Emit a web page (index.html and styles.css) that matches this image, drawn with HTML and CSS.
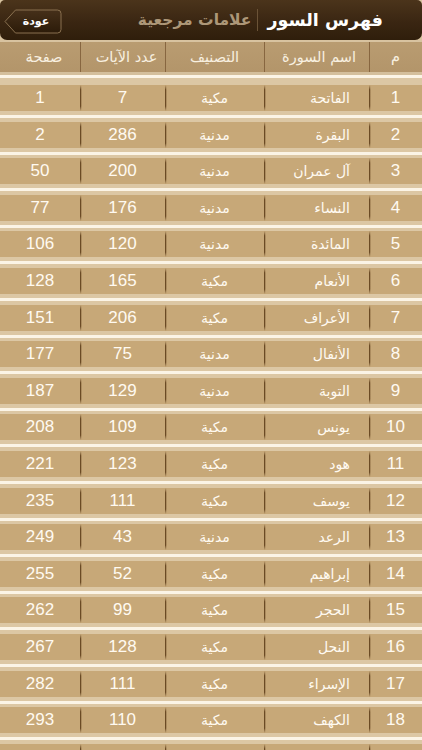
FILE: index.html
```html
<!DOCTYPE html>
<html lang="ar" dir="rtl">
<head>
<meta charset="utf-8">
<title>فهرس السور</title>
<link rel="stylesheet" href="styles.css">
</head>
<body>
<header class="topbar">
  <h1 class="title">فهرس السور</h1>
  <span class="title-sep"></span>
  <h2 class="subtitle">علامات مرجعية</h2>
  <button class="back">
    <svg class="back-shape" width="58" height="25" viewBox="0 0 58 25" aria-hidden="true">
      <defs>
        <linearGradient id="bg" x1="0" y1="0" x2="0" y2="1">
          <stop offset="0" stop-color="#46301a"/>
          <stop offset="1" stop-color="#2c1b09"/>
        </linearGradient>
      </defs>
      <path d="M1 12.5 L11.5 1 H53.5 Q57 1 57 4.5 V20.5 Q57 24 53.5 24 H11.5 Z" fill="url(#bg)" stroke="#8a7150" stroke-width="1"/>
    </svg>
    <span class="back-label">عودة</span>
  </button>
</header>

<div class="table-head">
  <div class="hcell c-num">م</div>
  <div class="hcell c-name">اسم السورة</div>
  <div class="hcell c-type">التصنيف</div>
  <div class="hcell c-count">عدد الآيات</div>
  <div class="hcell c-page">صفحة</div>
</div>
<div class="head-sep"></div>

<div class="rows">
  <div class="row"><div class="cell c-num">1</div><div class="cell c-name">الفاتحة</div><div class="cell c-type">مكية</div><div class="cell c-count">7</div><div class="cell c-page">1</div></div>
  <div class="row"><div class="cell c-num">2</div><div class="cell c-name">البقرة</div><div class="cell c-type">مدنية</div><div class="cell c-count">286</div><div class="cell c-page">2</div></div>
  <div class="row"><div class="cell c-num">3</div><div class="cell c-name">آل عمران</div><div class="cell c-type">مدنية</div><div class="cell c-count">200</div><div class="cell c-page">50</div></div>
  <div class="row"><div class="cell c-num">4</div><div class="cell c-name">النساء</div><div class="cell c-type">مدنية</div><div class="cell c-count">176</div><div class="cell c-page">77</div></div>
  <div class="row"><div class="cell c-num">5</div><div class="cell c-name">المائدة</div><div class="cell c-type">مدنية</div><div class="cell c-count">120</div><div class="cell c-page">106</div></div>
  <div class="row"><div class="cell c-num">6</div><div class="cell c-name">الأنعام</div><div class="cell c-type">مكية</div><div class="cell c-count">165</div><div class="cell c-page">128</div></div>
  <div class="row"><div class="cell c-num">7</div><div class="cell c-name">الأعراف</div><div class="cell c-type">مكية</div><div class="cell c-count">206</div><div class="cell c-page">151</div></div>
  <div class="row"><div class="cell c-num">8</div><div class="cell c-name">الأنفال</div><div class="cell c-type">مدنية</div><div class="cell c-count">75</div><div class="cell c-page">177</div></div>
  <div class="row"><div class="cell c-num">9</div><div class="cell c-name">التوبة</div><div class="cell c-type">مدنية</div><div class="cell c-count">129</div><div class="cell c-page">187</div></div>
  <div class="row"><div class="cell c-num">10</div><div class="cell c-name">يونس</div><div class="cell c-type">مكية</div><div class="cell c-count">109</div><div class="cell c-page">208</div></div>
  <div class="row"><div class="cell c-num">11</div><div class="cell c-name">هود</div><div class="cell c-type">مكية</div><div class="cell c-count">123</div><div class="cell c-page">221</div></div>
  <div class="row"><div class="cell c-num">12</div><div class="cell c-name">يوسف</div><div class="cell c-type">مكية</div><div class="cell c-count">111</div><div class="cell c-page">235</div></div>
  <div class="row"><div class="cell c-num">13</div><div class="cell c-name">الرعد</div><div class="cell c-type">مدنية</div><div class="cell c-count">43</div><div class="cell c-page">249</div></div>
  <div class="row"><div class="cell c-num">14</div><div class="cell c-name">إبراهيم</div><div class="cell c-type">مكية</div><div class="cell c-count">52</div><div class="cell c-page">255</div></div>
  <div class="row"><div class="cell c-num">15</div><div class="cell c-name">الحجر</div><div class="cell c-type">مكية</div><div class="cell c-count">99</div><div class="cell c-page">262</div></div>
  <div class="row"><div class="cell c-num">16</div><div class="cell c-name">النحل</div><div class="cell c-type">مكية</div><div class="cell c-count">128</div><div class="cell c-page">267</div></div>
  <div class="row"><div class="cell c-num">17</div><div class="cell c-name">الإسراء</div><div class="cell c-type">مكية</div><div class="cell c-count">111</div><div class="cell c-page">282</div></div>
  <div class="row"><div class="cell c-num">18</div><div class="cell c-name">الكهف</div><div class="cell c-type">مكية</div><div class="cell c-count">110</div><div class="cell c-page">293</div></div>
  <div class="row"><div class="cell c-num"></div><div class="cell c-name"></div><div class="cell c-type"></div><div class="cell c-count"></div><div class="cell c-page"></div></div>
</div>
</body>
</html>
```

FILE: styles.css
```css
html, body {
  margin: 0;
  padding: 0;
}
body {
  width: 422px;
  height: 750px;
  overflow: hidden;
  background: #d8c3a0;
  font-family: "Liberation Sans", "DejaVu Sans", sans-serif;
  direction: rtl;
}

/* ---------- top bar ---------- */
.topbar {
  height: 40px;
  box-sizing: border-box;
  display: flex;
  align-items: center;
  padding: 0 39px 0 4px;
  background: linear-gradient(to bottom, #4b341b 0%, #3a2612 55%, #2f1e0b 100%);
  border-radius: 5px 5px 7px 7px;
}
.title {
  margin: 0;
  font-family: "DejaVu Sans", sans-serif;
  font-size: 17.5px;
  font-weight: bold;
  color: #ffffff;
  line-height: 40px;
}
.title-sep {
  width: 1px;
  height: 22px;
  margin: 0 9px 0 6px;
  background: #6b5337;
}
.subtitle {
  margin: 0;
  font-family: "DejaVu Sans", sans-serif;
  font-size: 15.5px;
  font-weight: bold;
  color: #ad9778;
  line-height: 40px;
}
.back {
  margin-right: auto;
  position: relative;
  width: 58px;
  height: 25px;
  padding: 0;
  border: 0;
  background: none;
  display: flex;
  align-items: center;
  justify-content: center;
  margin-top: 2px;
}
.back-shape {
  position: absolute;
  left: 0;
  top: 0;
}
.back-label {
  position: relative;
  font-family: "DejaVu Sans", sans-serif;
  font-size: 11px;
  font-weight: bold;
  color: #ffffff;
  padding-left: 6px;
}

/* ---------- table ---------- */
.table-head,
.row {
  display: grid;
  grid-template-columns: 53px 105px 99px 85px 80px;
}
.table-head {
  margin-top: 2px;
  height: 30px;
  background: linear-gradient(to bottom, #b99c71, #b3956a);
}
.hcell {
  display: flex;
  align-items: center;
  justify-content: center;
  font-family: "DejaVu Sans", sans-serif;
  font-size: 14.5px;
  color: #f8f0e0;
}
.hcell.c-num,
.hcell.c-name,
.hcell.c-type,
.hcell.c-count {
  background: linear-gradient(#876640, #876640) left top / 1px 100% no-repeat;
}
.hcell.c-name {
  padding-left: 5px;
}
.hcell.c-count {
  padding-left: 8px;
}
.hcell.c-page {
  padding-left: 8px;
}

.head-sep {
  height: 13px;
  background: linear-gradient(to bottom,
    #d4bf9c 0, #d4bf9c 3.5px,
    #fbf4e6 3.5px, #fbf4e6 6.5px,
    #dcc7a4 6.5px, #dcc7a4 13px);
}

.rows {
  display: flex;
  flex-direction: column;
}
.row {
  height: 36.6px;
  grid-template-rows: 26px;
  align-content: start;
  background: linear-gradient(to bottom,
    #c7a878 0, #c7a878 26px,
    #dcc7a4 26px, #dcc7a4 30.4px,
    #fbf4e6 30.4px, #fbf4e6 33px,
    #dcc7a4 33px, #dcc7a4 36.6px);
  flex: none;
}
.cell {
  height: 26px;
  line-height: 26px;
  text-align: center;
  color: #fffaf1;
  font-size: 17px;
  white-space: nowrap;
}
.cell.c-name,
.cell.c-type {
  font-family: "DejaVu Sans", sans-serif;
  font-size: 14px;
}
.cell.c-name {
  text-align: right;
  padding-right: 19px;
}
.cell.c-num,
.cell.c-name,
.cell.c-type,
.cell.c-count {
  background:
    linear-gradient(to bottom, rgba(106,74,36,0) 0, #6a4a24 18%, #6a4a24 82%, rgba(106,74,36,0) 100%) left top / 1px 100% no-repeat,
    linear-gradient(to bottom, rgba(160,128,84,0) 0, rgba(160,128,84,0.7) 20%, rgba(160,128,84,0.7) 80%, rgba(160,128,84,0) 100%) 1px top / 1px 100% no-repeat;
}
```
